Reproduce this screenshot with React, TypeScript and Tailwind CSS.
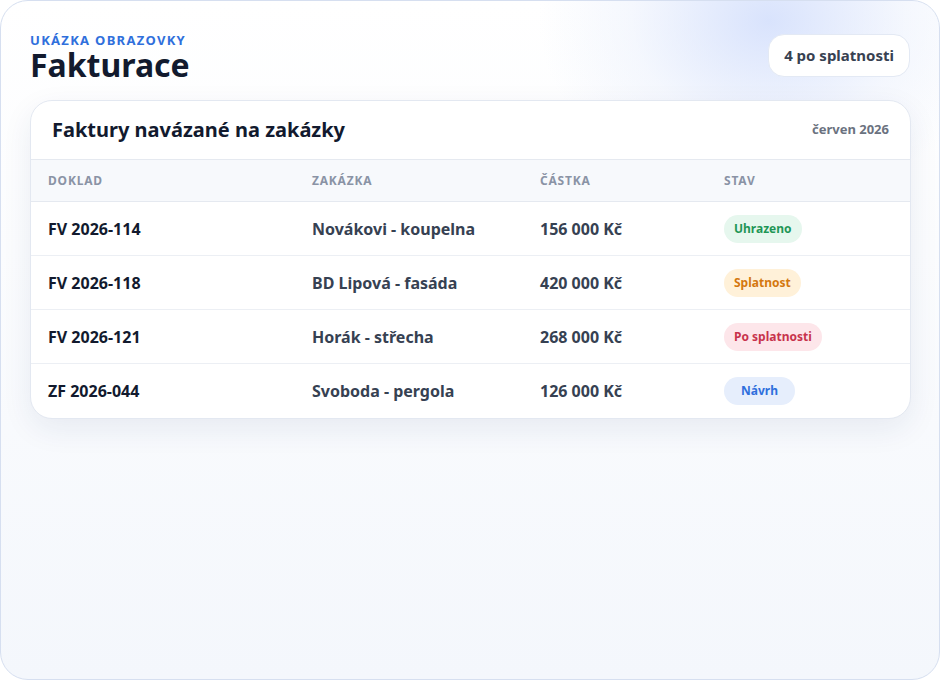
import React from "react";

const rows = [
  { d: "FV 2026-114", z: "Novákovi - koupelna", c: "156 000 Kč", s: "Uhrazeno", cls: "bg-[#e6f7ee] text-[#1f9656]" },
  { d: "FV 2026-118", z: "BD Lipová - fasáda", c: "420 000 Kč", s: "Splatnost", cls: "bg-[#fff1d9] text-[#d4780f]" },
  { d: "FV 2026-121", z: "Horák - střecha", c: "268 000 Kč", s: "Po splatnosti", cls: "bg-[#fde6ea] text-[#c8334c]" },
  { d: "ZF 2026-044", z: "Svoboda - pergola", c: "126 000 Kč", s: "Návrh", cls: "bg-[#e6eefc] text-[#2f6fdc] px-[17px]" },
];

export default function App() {
  return (
    <div className="w-[940px] h-[680px] bg-white font-[family-name:'DejaVu_Sans',sans-serif]">
      <div className="relative w-[940px] h-[680px] rounded-[28px] border border-[#d6dff0] overflow-hidden bg-gradient-to-b from-white to-[#f4f7fc]">
        <div className="absolute -top-[160px] right-[-60px] w-[460px] h-[360px] rounded-full bg-[radial-gradient(closest-side,rgba(210,222,252,0.85),rgba(230,237,252,0.4)_60%,rgba(255,255,255,0))]" />
        <div className="relative px-[29px] pt-[31px]">
          <div className="flex justify-between items-start">
            <div>
              <div className="text-[13px] font-bold tracking-[1.3px] text-[#2f6fdc] leading-[16px]">UKÁZKA OBRAZOVKY</div>
              <div className="text-[32px] font-bold text-[#121a2e] leading-[36px] -mt-[1px]">Fakturace</div>
            </div>
            <div className="mt-[2px] h-[43px] px-[15px] flex items-center rounded-[16px] bg-white border border-[#e3e9f4] text-[15px] font-bold text-[#374151]">4 po splatnosti</div>
          </div>
          <div className="mt-[17px] w-[881px] rounded-[22px] bg-white border border-[#e3e8f1] shadow-[0_10px_30px_rgba(30,50,100,0.08)] overflow-hidden">
            <div className="h-[59px] flex items-center justify-between pl-[21px] pr-[21px] border-b border-[#e5e9f0]">
              <div className="text-[20px] font-bold text-[#121a2e]">Faktury navázané na zakázky</div>
              <div className="text-[13px] font-bold text-[#6b7280]">červen 2026</div>
            </div>
            <div className="h-[42px] flex items-center px-[17px] bg-[#f7f9fc] border-b border-[#e5e9f0] text-[12px] font-bold tracking-[0.8px] text-[#8a93a5]">
              <div className="w-[264px]">DOKLAD</div>
              <div className="w-[228px]">ZAKÁZKA</div>
              <div className="w-[184px]">ČÁSTKA</div>
              <div>STAV</div>
            </div>
            {rows.map((r, i) => (
              <div key={i} className={`h-[54px] flex items-center px-[17px] text-[16px] font-bold ${i < 3 ? "border-b border-[#eceff4]" : ""}`}>
                <div className="w-[264px] text-[#121a2e]">{r.d}</div>
                <div className="w-[228px] text-[#364152]">{r.z}</div>
                <div className="w-[184px] text-[#364152]">{r.c}</div>
                <div>
                  <span className={`inline-flex items-center h-[28px] px-[10px] rounded-full text-[12px] font-bold ${r.cls}`}>{r.s}</span>
                </div>
              </div>
            ))}
          </div>
        </div>
      </div>
    </div>
  );
}
